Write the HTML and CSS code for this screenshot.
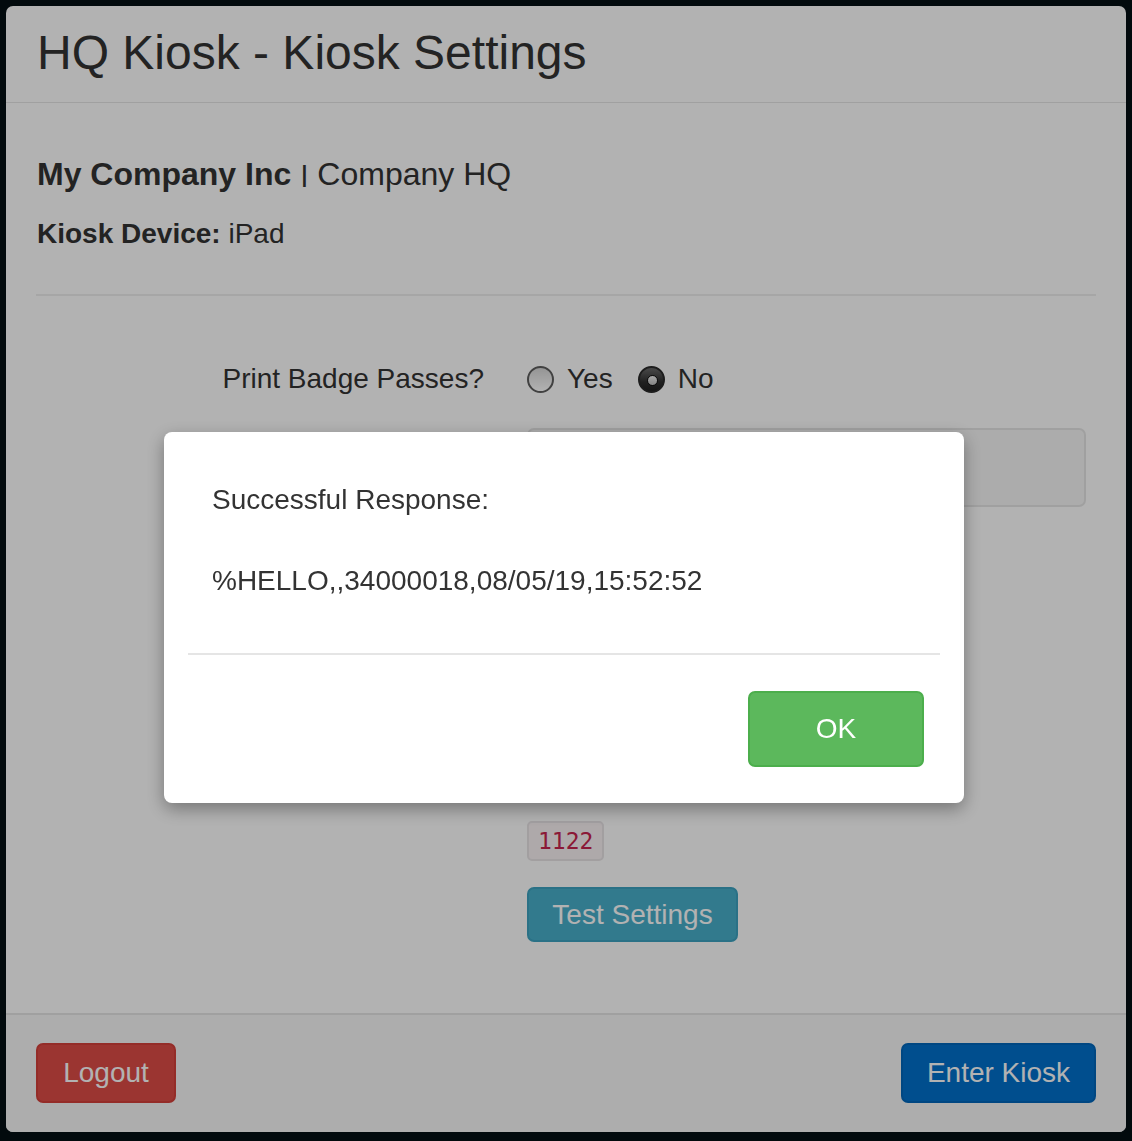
FILE: index.html
```html
<!DOCTYPE html>
<html lang="en">
<head>
<meta charset="utf-8">
<title>HQ Kiosk - Kiosk Settings</title>
<link rel="stylesheet" href="styles.css">
</head>
<body>
<div class="panel">
  <header class="panel-header">
    <h1 class="title">HQ Kiosk - Kiosk Settings</h1>
  </header>
  <main class="panel-body">
    <p class="company"><strong>My Company Inc</strong> <span class="sep">|</span> Company HQ</p>
    <p class="device"><strong>Kiosk Device:</strong> iPad</p>
    <hr class="divider">
    <div class="form-row">
      <label class="form-label">Print Badge Passes?</label>
      <div class="form-control-col">
        <label class="radio"><span class="radio-dot"></span>Yes</label>
        <label class="radio"><span class="radio-dot checked"></span>No</label>
      </div>
    </div>
    <div class="form-row">
      <div class="form-label"></div>
      <div class="form-control-col">
        <div class="text-input"></div>
      </div>
    </div>
    <div class="form-row tail">
      <div class="form-label"></div>
      <div class="form-control-col stack">
        <code class="code">1122</code>
        <button class="btn btn-info">Test Settings</button>
      </div>
    </div>
  </main>
  <footer class="panel-footer">
    <button class="btn btn-danger">Logout</button>
    <button class="btn btn-primary">Enter Kiosk</button>
  </footer>
</div>
<div class="backdrop"></div>
<div class="dialog">
  <div class="dialog-body">
    <p class="dialog-text">Successful Response:</p>
    <p class="dialog-text second">%HELLO,,34000018,08/05/19,15:52:52</p>
  </div>
  <div class="dialog-footer">
    <button class="btn btn-success">OK</button>
  </div>
</div>
</body>
</html>
```

FILE: styles.css
```css
* { box-sizing: border-box; }

html, body {
  margin: 0;
  padding: 0;
}

body {
  background: #040f13;
  font-family: "Liberation Sans", Arial, sans-serif;
  color: #333333;
  width: 1132px;
  height: 1141px;
  overflow: hidden;
  padding: 6px;
}

.panel {
  width: 1120px;
  height: 1126px;
  background: #ffffff;
  border-radius: 7px;
  display: flex;
  flex-direction: column;
  overflow: hidden;
}

.panel-header {
  height: 97px;
  border-bottom: 1px solid #e5e5e5;
  padding: 23px 30px 0 31px;
}

.title {
  margin: 0;
  font-size: 48px;
  font-weight: normal;
  line-height: 48px;
  color: #333333;
}

.panel-body {
  flex: 1;
  padding: 0 30px;
}

.company {
  margin: 57px 0 0 1px;
  font-size: 32px;
  line-height: 28px;
}

.company .sep {
  display: inline-block;
  transform: scaleY(0.75);
}

.device {
  margin: 32px 0 0 1px;
  font-size: 28px;
  line-height: 28px;
}

.divider {
  border: 0;
  border-top: 2px solid #eeeeee;
  margin: 46px 0 0 0;
  height: 0;
}

.form-row {
  display: grid;
  grid-template-columns: 491px 1fr;
}

.form-label {
  text-align: right;
  padding-right: 43px;
  font-size: 28px;
  line-height: 28px;
  color: #333333;
}

.divider + .form-row {
  margin-top: 69px;
  align-items: center;
}

.form-control-col {
  display: flex;
  align-items: center;
  padding-right: 10px;
}

.radio {
  display: flex;
  align-items: center;
  font-size: 28px;
  line-height: 28px;
  margin-right: 25px;
}

.radio-dot {
  width: 27px;
  height: 27px;
  border-radius: 50%;
  border: 2px solid #5e5e5e;
  background: linear-gradient(#d6d6d6, #ffffff);
  margin-right: 13px;
  position: relative;
}

.radio-dot.checked {
  border-color: #2a2a2a;
  background: linear-gradient(#6a6a6a, #303030 60%, #202020);
}

.radio-dot.checked::after {
  content: "";
  position: absolute;
  left: 7px;
  top: 7px;
  width: 9px;
  height: 9px;
  border-radius: 50%;
  background: linear-gradient(#f0f0f0, #bfbfbf);
  border: 1px solid #111;
}

.form-row + .form-row {
  margin-top: 35px;
}

.text-input {
  width: 100%;
  height: 79px;
  border: 2px solid #e6e6e6;
  border-radius: 7px;
  background: #f7f7f7;
}

.form-row.tail {
  margin-top: 314px;
}

.stack {
  flex-direction: column;
  align-items: flex-start;
}

.code {
  font-family: "DejaVu Sans Mono", "Liberation Mono", monospace;
  font-size: 23px;
  line-height: 36px;
  color: #c7254e;
  background: #f9f2f4;
  border: 2px solid #e8e4e6;
  border-radius: 5px;
  padding: 0 9px;
  height: 40px;
}

.btn {
  font-family: "Liberation Sans", Arial, sans-serif;
  font-size: 28px;
  border-radius: 7px;
  color: #ffffff;
  border: 2px solid transparent;
  cursor: pointer;
  padding: 0;
}

.btn-info {
  margin-top: 26px;
  width: 211px;
  height: 55px;
  background: #48afcb;
  border-color: #3da3c0;
}

.panel-footer {
  height: 119px;
  border-top: 2px solid #e5e5e5;
  background: #f8f8f8;
  display: flex;
  justify-content: space-between;
  align-items: flex-start;
  padding: 28px 30px 0 30px;
}

.btn-danger {
  width: 140px;
  height: 60px;
  background: #df4c47;
  border-color: #d43f3a;
}

.btn-primary {
  width: 195px;
  height: 60px;
  background: #0070cc;
  border-color: #0066bb;
}

.backdrop {
  position: fixed;
  inset: 0;
  background: rgba(0, 0, 0, 0.3);
}

.dialog {
  position: fixed;
  left: 164px;
  top: 432px;
  width: 800px;
  height: 371px;
  background: #ffffff;
  border-radius: 8px;
  box-shadow: 0 6px 18px rgba(0, 0, 0, 0.35);
  padding: 0 24px;
  display: flex;
  flex-direction: column;
}

.dialog-body {
  padding: 54px 24px 0 24px;
  height: 223px;
  border-bottom: 2px solid #e5e5e5;
}

.dialog-text {
  margin: 0;
  font-size: 28px;
  line-height: 28px;
  color: #333333;
}

.dialog-text.second {
  margin-top: 53px;
}

.dialog-footer {
  display: flex;
  justify-content: flex-end;
  padding: 36px 16px 0 0;
}

.btn-success {
  width: 176px;
  height: 76px;
  background: #5cb85c;
  border-color: #4cae4c;
}
```
